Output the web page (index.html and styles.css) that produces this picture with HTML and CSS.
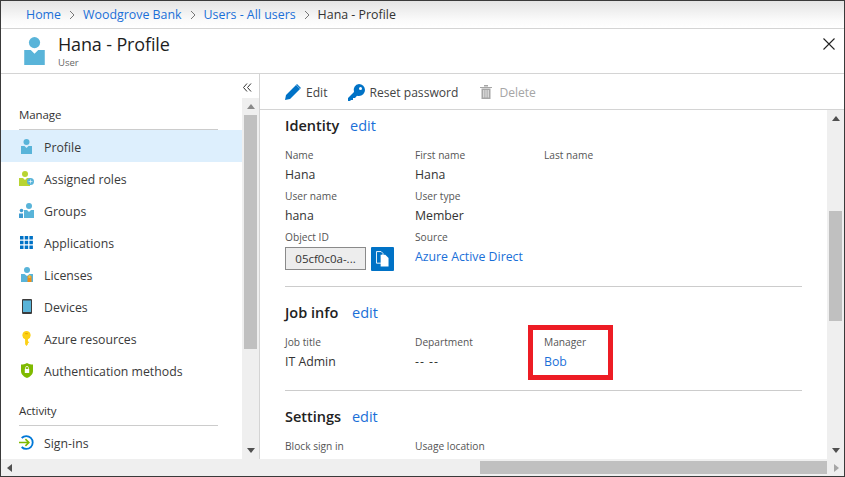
FILE: index.html
```html
<!DOCTYPE html>
<html lang="en">
<head>
<meta charset="utf-8">
<title>Hana - Profile</title>
<link rel="stylesheet" href="styles.css">
</head>
<body>
<div class="window">
  <nav class="crumbs">
    <a>Home</a><svg class="chev" viewBox="0 0 8 10"><path d="M2 1l4 4-4 4" fill="none" stroke="#777" stroke-width="1"/></svg>
    <a>Woodgrove Bank</a><svg class="chev" viewBox="0 0 8 10"><path d="M2 1l4 4-4 4" fill="none" stroke="#777" stroke-width="1"/></svg>
    <a>Users - All users</a><svg class="chev" viewBox="0 0 8 10"><path d="M2 1l4 4-4 4" fill="none" stroke="#777" stroke-width="1"/></svg>
    <span>Hana - Profile</span>
  </nav>
  <header class="head">
    <svg class="head-icon" viewBox="0 0 22 30"><circle cx="11" cy="6" r="6" fill="#59b4d9"/><path d="M0 14h7l4 4 4-4h7v16H0z" fill="#59b4d9"/></svg>
    <div class="head-text"><h1>Hana - Profile</h1><p>User</p></div>
    <svg class="close" viewBox="0 0 12 12"><path d="M.5.5l11 11M11.5.5l-11 11" stroke="#222" stroke-width="1.1" fill="none"/></svg>
  </header>
  <div class="main">
    <aside class="side">
      <div class="collapse"><svg viewBox="0 0 9 9" class="dbl"><path d="M4 .5L.5 4.5 4 8.500M8 .5L4.500 4.500 8 8.500" fill="none" stroke="#333" stroke-width="1"/></svg></div>
      <div class="side-body">
        <div class="side-list">
          <h2 class="group">Manage</h2>
          <a class="item active"><svg viewBox="0 0 22 30" class="ic user"><circle cx="11" cy="6" r="6" fill="#59b4d9"/><path d="M0 14h7l4 4 4-4h7v16H0z" fill="#59b4d9"/></svg>Profile</a>
          <a class="item"><svg viewBox="0 0 15 15" class="ic"><circle cx="6" cy="3" r="3" fill="#b8d432"/><path d="M0 7h4l2 2 2-2h3v8H0z" fill="#b8d432"/><circle cx="11.500" cy="10.500" r="3.500" fill="#59b4d9"/><path d="M9.500 10.500h4M11.500 8.500v4" stroke="#fff" stroke-width=".6"/></svg>Assigned roles</a>
          <a class="item"><svg viewBox="0 0 15 15" class="ic"><circle cx="10" cy="3" r="3" fill="#59b4d9"/><path d="M5 7h3l2 2 2-2h3v8H5z" fill="#59b4d9"/><circle cx="2.500" cy="7.500" r="1.800" fill="#3f9bd0"/><path d="M0 10.500h4V15H0z" fill="#3f9bd0"/></svg>Groups</a>
          <a class="item"><svg viewBox="0 0 13 13" class="ic apps"><path d="M0 0h3.500v3.500H0zM4.700 0h3.500v3.500H4.700zM9.400 0h3.500v3.500H9.400zM0 4.700h3.500v3.500H0zM4.700 4.700h3.500v3.500H4.700zM9.400 4.700h3.500v3.500H9.400zM0 9.400h3.500v3.500H0zM4.700 9.400h3.500v3.500H4.700zM9.400 9.400h3.500v3.500H9.400z" fill="#0072c6"/></svg>Applications</a>
          <a class="item"><svg viewBox="0 0 12 15" class="ic lic"><circle cx="6" cy="3" r="3" fill="#59b4d9"/><path d="M0 7h3.500L6 9l2.500-2H12v8H0z" fill="#59b4d9"/><path d="M6.500 9h4v6h-4z" fill="#ff8c00" opacity=".9"/><path d="M7.500 8h2v3h-2z" fill="#e8c24a"/></svg>Licenses</a>
          <a class="item"><svg viewBox="0 0 10 15" class="ic dev"><rect width="10" height="15" rx="1" fill="#3c3c3c"/><rect x="1" y="1.500" width="8" height="11.500" fill="#59b4d9"/></svg>Devices</a>
          <a class="item"><svg viewBox="0 0 9 16" class="ic key"><path d="M4.500 0a4.500 4.500 0 0 1 1.500 8.700V11l1.500 1-1.500 1v1l-1.500 2-1.500-2V8.700A4.500 4.500 0 0 1 4.500 0z" fill="#fcd116"/><rect x="3" y="2" width="3" height="1.500" rx=".7" fill="#e8a800"/></svg>Azure resources</a>
          <a class="item"><svg viewBox="0 0 12 15" class="ic shield"><path d="M6 0c2 1.200 4 1.500 6 1.500v6.500c0 3.500-3 5.800-6 7-3-1.200-6-3.500-6-7V1.500C2 1.500 4 1.200 6 0z" fill="#7fba00"/><rect x="3.800" y="6" width="4.400" height="4" fill="#fff"/><path d="M4.600 6V4.800a1.400 1.400 0 0 1 2.800 0V6" fill="none" stroke="#fff" stroke-width=".8"/></svg>Authentication methods</a>
          <h2 class="group second">Activity</h2>
          <a class="item"><svg viewBox="0 0 14 14" class="ic sign"><path d="M2.500 2.800A6 6 0 1 1 2.500 11.200" fill="none" stroke="#0078d7" stroke-width="1.700"/><path d="M0 7h9M6 3.800L9.200 7 6 10.200" fill="none" stroke="#7fba00" stroke-width="1.500"/></svg>Sign-ins</a>
        </div>
        <div class="vbar">
          <span class="arrow up dim"></span>
          <div class="track"><div class="thumb side-thumb"></div></div>
          <span class="arrow down"></span>
        </div>
      </div>
    </aside>
    <section class="pane">
      <div class="toolbar">
        <a class="tool"><svg viewBox="0 0 16 16" class="tool-ic"><path d="M0 16l1-5L11 1l4 4L5 15zM12 0l4 4-.8.800-4-4z" fill="#0072c6"/></svg>Edit</a>
        <a class="tool key-tool"><svg viewBox="0 0 17 17" class="tool-ic key-ic"><path d="M11 0a6 6 0 0 1 0 12 6 6 0 0 1-2-.300L7 14H5v2H3l-1 1H0v-3l6-6a6 6 0 0 1 5-8z" fill="#0072c6"/><circle cx="12.500" cy="4.500" r="1.500" fill="#fff"/></svg>Reset password</a>
        <a class="tool off"><svg viewBox="0 0 12 14" class="tool-ic trash"><path d="M0 2h12v1H0zM4 0h4v1.500H4zM1.500 3.500h9V14h-9z" fill="#a6a6a6"/><path d="M3.800 5v7.500M6 5v7.500M8.200 5v7.500" stroke="#fff" stroke-width=".8"/></svg>Delete</a>
      </div>
      <div class="pane-body">
        <div class="content">
          <div class="section identity">
            <h3>Identity <a class="edit">edit</a></h3>
            <div class="fields">
              <div class="field"><label>Name</label><span>Hana</span></div>
              <div class="field"><label>First name</label><span>Hana</span></div>
              <div class="field"><label>Last name</label><span></span></div>
              <div class="field"><label>User name</label><span>hana</span></div>
              <div class="field"><label>User type</label><span>Member</span></div>
              <div class="field"></div>
              <div class="field"><label>Object ID</label>
                <div class="objid"><span class="idbox">05cf0c0a-...</span><button class="copy"><svg viewBox="0 0 14 17"><path d="M.5.500h5l2 2v10.500h-7z" fill="none" stroke="#fff"/><path d="M5 4h5l3.500 3.500V16.500H5z" fill="#fff"/></svg></button></div>
              </div>
              <div class="field"><label>Source</label><a class="link">Azure Active Direct</a></div>
            </div>
          </div>
          <div class="section job">
            <h3>Job info <a class="edit">edit</a></h3>
            <div class="fields">
              <div class="field"><label>Job title</label><span>IT Admin</span></div>
              <div class="field"><label>Department</label><span class="dashes">-- --</span></div>
              <div class="field"><label>Manager</label><a class="link">Bob</a></div>
            </div>
            <div class="callout"></div>
          </div>
          <div class="section last">
            <h3>Settings <a class="edit">edit</a></h3>
            <div class="fields">
              <div class="field"><label>Block sign in</label></div>
              <div class="field"><label>Usage location</label></div>
            </div>
          </div>
        </div>
        <div class="vbar">
          <span class="arrow up"></span>
          <div class="track"><div class="thumb pane-thumb"></div></div>
          <span class="arrow down"></span>
        </div>
      </div>
    </section>
  </div>
  <div class="hbar">
    <span class="arrow left"></span>
    <div class="htrack"><div class="hthumb"></div></div>
    <span class="arrow right"></span>
  </div>
</div>
</body>
</html>
```

FILE: styles.css
```css
* { box-sizing: border-box; }
html, body { margin: 0; padding: 0; }
body { width: 845px; height: 477px; overflow: hidden; font-family: "Open Sans", "Noto Sans", sans-serif; color: #333; background: #fff; }
.window { width: 845px; height: 477px; display: flex; flex-direction: column; border: 1px solid #3a3a3a; overflow: hidden; }
a { color: inherit; text-decoration: none; }

.crumbs { height: 28px; flex: none; display: flex; align-items: center; padding-left: 25px; font-size: 12.400px; color: #333; border-bottom: 1px solid #d4d4d4; background: linear-gradient(#e4e4e4, #fafafa 70%, #fff); }
.crumbs a { color: #1a6fd8; }
.chev { width: 8px; height: 10px; margin: 0 7px; }

.head { height: 45px; flex: none; display: flex; align-items: flex-start; border-bottom: 1px solid #d4d4d4; position: relative; padding-left: 23px; }
.head-icon { width: 21px; height: 28px; margin-top: 8px; flex: none; }
.head-text { margin-left: 13px; }
.head h1 { margin: 2px 0 0; font-size: 18px; line-height: 26px; font-weight: 400; color: #1e1e1e; letter-spacing: -.15px; }
.head p { margin: 0; font-size: 9.500px; line-height: 12px; color: #666; }
.close { width: 12px; height: 12px; position: absolute; top: 9px; right: 9px; }

.main { flex: 1; display: flex; min-height: 0; }
.side { width: 259px; flex: none; display: flex; flex-direction: column; border-right: 1px solid #d4d4d4; }
.collapse { height: 24px; flex: none; display: flex; justify-content: flex-end; align-items: center; padding-right: 7px; }
.dbl { width: 9px; height: 9px; margin-top: 2px; }
.side-body { flex: 1; display: flex; min-height: 0; }
.side-list { flex: 1; min-width: 0; }
.group { margin: 0 24px 0 18px; height: 32px; padding-top: 9px; font-size: 11.500px; line-height: 16px; font-weight: 400; color: #333; border-bottom: 1px solid #ccc; letter-spacing: -.1px; }
.group.second { height: 40px; padding-top: 17px; }
.item { height: 32px; display: flex; align-items: center; padding: 2px 0 0 43px; position: relative; font-size: 12.300px; color: #3a3a3a; }
.item.active { background: #ddeffd; }
.ic { position: absolute; left: 18px; top: 9px; width: 15px; height: 15px; }
.ic.user { left: 20px; width: 11px; }
.ic.apps { left: 19px; width: 13px; height: 13px; top: 10px; }
.ic.lic { left: 20px; width: 12px; }
.ic.dev { left: 21px; width: 10px; }
.ic.key { left: 21px; width: 9px; }
.ic.shield { left: 20px; width: 12px; }

.vbar { width: 17px; flex: none; background: #efefef; display: flex; flex-direction: column; align-items: center; }
.track { flex: 1; width: 100%; padding: 0 2px; min-height: 0; }
.thumb { background: #c0c0c0; width: 13px; }
.side-thumb { height: 234px; }
.pane-thumb { height: 110px; margin-top: 84px; }
.arrow { display: block; flex: none; width: 0; height: 0; border: solid transparent; }
.arrow.up { border-width: 0 4px 5px; border-bottom-color: #505050; margin: 6px 0; }
.arrow.up.dim { border-bottom-color: #8a8a8a; }
.arrow.down { border-width: 5px 4px 0; border-top-color: #505050; margin: 6px 0; }

.pane { flex: 1; min-width: 0; display: flex; flex-direction: column; }
.toolbar { height: 36px; flex: none; display: flex; align-items: center; padding: 1px 0 0 25px; gap: 21px; border-bottom: 1px solid #d4d4d4; font-size: 12.100px; }
.tool { display: flex; align-items: center; gap: 5px; color: #444; }
.key-tool { gap: 4px; }
.tool.off { color: #a6a6a6; gap: 7px; margin-left: 1px; }
.tool-ic { width: 16px; height: 16px; }
.tool-ic.key-ic { width: 17px; height: 17px; }
.tool-ic.trash { width: 12px; height: 14px; }
.pane-body { flex: 1; display: flex; min-height: 0; }
.content { flex: 1; min-width: 0; padding: 0 25px; overflow: hidden; }
.section { border-bottom: 1px solid #ccc; position: relative; }
.section h3 { margin: 0; font-size: 14.500px; line-height: 20px; font-weight: 600; color: #222; padding-top: 16px; height: 48px; }
.edit { font-weight: 400; color: #1a6fd8; margin-left: 7px; }
.fields { display: grid; grid-template-columns: 130px 129px 1fr; row-gap: 4px; }
.field { min-height: 37px; display: flex; flex-direction: column; }
.field label { font-size: 10.200px; line-height: 14px; margin-bottom: 3px; color: #555; }
.field span, .field .link { font-size: 12.300px; line-height: 20px; color: #333; }
.field .link { color: #1a6fd8; }
.field .dashes { letter-spacing: 1px; }
.objid { display: flex; gap: 5px; align-items: flex-start; height: 24px; }
.field .objid .idbox { width: 81px; height: 23px; line-height: 21px; text-align: center; font-size: 11.500px; background: #ededed; border: 1px solid #8a8a8a; }
.copy { width: 23px; height: 24px; padding: 4px 5px; border: 0; background: #0072c6; border-radius: 1px; display: block; }
.copy svg { display: block; width: 13px; height: 16px; }
.identity { height: 177px; }
.identity h3 { padding-top: 6px; height: 38px; }
.job { height: 104px; }
.job .edit { margin-left: 10px; }
.last { border-bottom: 0; }
.callout { position: absolute; left: 243px; top: 38px; width: 85px; height: 55px; border: 5px solid #ed1c24; }

.hbar { height: 17px; flex: none; background: #efefef; display: flex; align-items: center; }
.arrow.left { border-width: 4px 5px 4px 0; border-right-color: #505050; margin: 0 6px; }
.arrow.right { border-width: 4px 0 4px 5px; border-left-color: #a6a6a6; margin: 0 5px 0 7px; }
.htrack { flex: 1; height: 13px; display: flex; justify-content: flex-end; }
.hthumb { width: 347px; height: 13px; background: #c0c0c0; }
```
